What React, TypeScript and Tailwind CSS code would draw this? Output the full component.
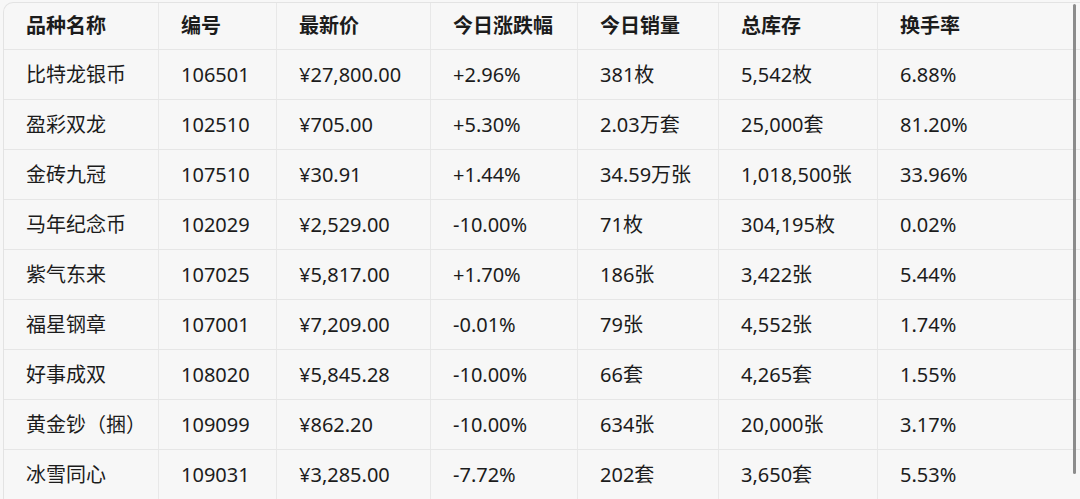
import React from "react";

const headers = ["品种名称", "编号", "最新价", "今日涨跌幅", "今日销量", "总库存", "换手率"];
const rows = [
  ["比特龙银币", "106501", "¥27,800.00", "+2.96%", "381枚", "5,542枚", "6.88%"],
  ["盈彩双龙", "102510", "¥705.00", "+5.30%", "2.03万套", "25,000套", "81.20%"],
  ["金砖九冠", "107510", "¥30.91", "+1.44%", "34.59万张", "1,018,500张", "33.96%"],
  ["马年纪念币", "102029", "¥2,529.00", "-10.00%", "71枚", "304,195枚", "0.02%"],
  ["紫气东来", "107025", "¥5,817.00", "+1.70%", "186张", "3,422张", "5.44%"],
  ["福星钢章", "107001", "¥7,209.00", "-0.01%", "79张", "4,552张", "1.74%"],
  ["好事成双", "108020", "¥5,845.28", "-10.00%", "66套", "4,265套", "1.55%"],
  ["黄金钞（捆）", "109099", "¥862.20", "-10.00%", "634张", "20,000张", "3.17%"],
  ["冰雪同心", "109031", "¥3,285.00", "-7.72%", "202套", "3,650套", "5.53%"],
];

const cols = "grid grid-cols-[155px_118px_154px_147px_141px_159px_1fr]";

export default function App() {
  return (
    <div
      className="relative w-[1080px] h-[499px] overflow-hidden bg-[#f7f7f7] text-[#1c1c1c]"
      style={{ fontFamily: '"Noto Sans", "Noto Sans CJK SC", sans-serif' }}
    >
      <div className="ml-[3px] mt-[2px] border-l border-t border-[#e3e3e3] rounded-tl-[10px]">
        <div className={`${cols} h-[47px] border-b border-[#e6e6e6] font-semibold text-[20px]`}>
          {headers.map((h, i) => (
            <div
              key={i}
              className={`flex items-center pl-[22px] ${i < 6 ? "border-r border-[#e8e8e8]" : ""}`}
            >
              {h}
            </div>
          ))}
        </div>
        {rows.map((r, ri) => (
          <div key={ri} className={`${cols} h-[50px] border-b border-[#e6e6e6] text-[20px]`}>
            {r.map((c, i) => (
              <div
                key={i}
                className={`flex items-center pl-[22px] pt-[1px] ${i < 6 ? "border-r border-[#e8e8e8]" : ""}`}
              >
                {c}
              </div>
            ))}
          </div>
        ))}
      </div>
      <div className="absolute right-[4px] top-[4px] h-[470px] w-[3px] rounded-full bg-[#8c8c8c]" />
    </div>
  );
}
